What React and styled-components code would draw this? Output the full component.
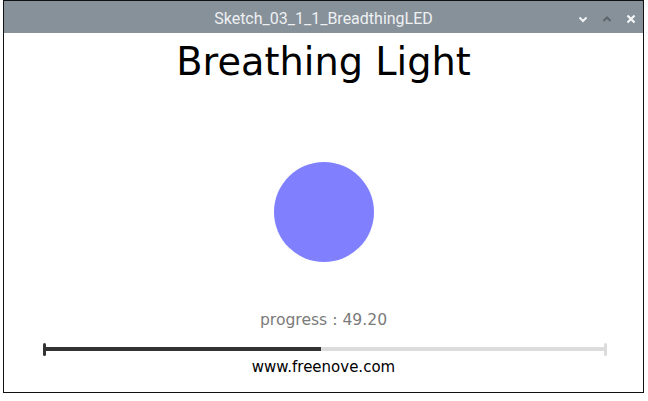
import React from "react";
import styled, { createGlobalStyle } from "styled-components";

const Global = createGlobalStyle`
  html, body { margin: 0; padding: 0; background: #ffffff; }
  body { width: 648px; height: 401px; overflow: hidden; }
`;

const Page = styled.div`
  padding: 0 0 0 3px;
`;

const Window = styled.div`
  width: 639px;
  height: 391px;
  border: 1px solid #111;
  display: flex;
  flex-direction: column;
  background: #fff;
`;

const TitleBar = styled.div`
  height: 32px;
  flex: none;
  background: #87919a;
  display: grid;
  grid-template-columns: 1fr auto 1fr;
  align-items: center;
`;

const TitleText = styled.div`
  grid-column: 2;
  font-family: Roboto, "Liberation Sans", sans-serif;
  font-size: 16px;
  color: #eef0f2;
  letter-spacing: 0;
  padding-top: 2px;
`;

const Controls = styled.div`
  grid-column: 3;
  justify-self: end;
  display: flex;
  align-items: center;
  gap: 12px;
  padding: 4px 6px 0 0;
`;

const Icon = styled.svg`
  display: block;
  width: 12px;
  height: 12px;
`;

const Content = styled.div`
  flex: 1;
  display: flex;
  flex-direction: column;
  align-items: center;
`;

const Heading = styled.h1`
  margin: 7px 0 0;
  height: 44px;
  font-family: "DejaVu Sans", sans-serif;
  font-weight: normal;
  font-size: 38.3px;
  line-height: 44px;
  color: #000;
`;

const Led = styled.div`
  margin-top: 78px;
  width: 100px;
  height: 100px;
  border-radius: 50%;
  background: #8080ff;
`;

const Progress = styled.div`
  margin-top: 49px;
  height: 18px;
  font-family: "DejaVu Sans", sans-serif;
  font-size: 15.6px;
  line-height: 18px;
  color: #7a7a7a;
`;

const Slider = styled.div`
  margin-top: 13px;
  width: 564px;
  height: 14px;
  display: flex;
  align-items: center;
  padding-left: 3px;
`;

const Cap = styled.div`
  flex: none;
  width: 3px;
  height: 13px;
  border-radius: 1.5px;
  background: ${(p) => p.$color};
`;

const Track = styled.div`
  flex: 1;
  height: 4px;
  background: #dcdcdc;
  display: flex;
`;

const Fill = styled.div`
  height: 100%;
  background: #333333;
`;

const Url = styled.div`
  margin-top: 2px;
  font-family: "DejaVu Sans", sans-serif;
  font-size: 15px;
  line-height: 18px;
  color: #000;
`;

export default function App() {
  const value = 49.2;
  return (
    <>
      <Global />
      <Page>
        <Window>
          <TitleBar>
            <TitleText>Sketch_03_1_1_BreadthingLED</TitleText>
            <Controls>
              <Icon viewBox="0 0 12 12">
                <path d="M2.5 4.5 L6 8 L9.5 4.5" fill="none" stroke="#f2f4f5" strokeWidth="2" />
              </Icon>
              <Icon viewBox="0 0 12 12">
                <path d="M2.5 8 L6 4.5 L9.5 8" fill="none" stroke="#5e666c" strokeWidth="2" />
              </Icon>
              <Icon viewBox="0 0 12 12">
                <path d="M2.5 2.5 L9.5 9.5 M9.5 2.5 L2.5 9.5" fill="none" stroke="#f4f6f7" strokeWidth="2.2" />
              </Icon>
            </Controls>
          </TitleBar>
          <Content>
            <Heading>Breathing Light</Heading>
            <Led />
            <Progress>progress : {value.toFixed(2)}</Progress>
            <Slider>
              <Cap $color="#333333" />
              <Track>
                <Fill style={{ width: `${value}%` }} />
              </Track>
              <Cap $color="#dcdcdc" />
            </Slider>
            <Url>www.freenove.com</Url>
          </Content>
        </Window>
      </Page>
    </>
  );
}
